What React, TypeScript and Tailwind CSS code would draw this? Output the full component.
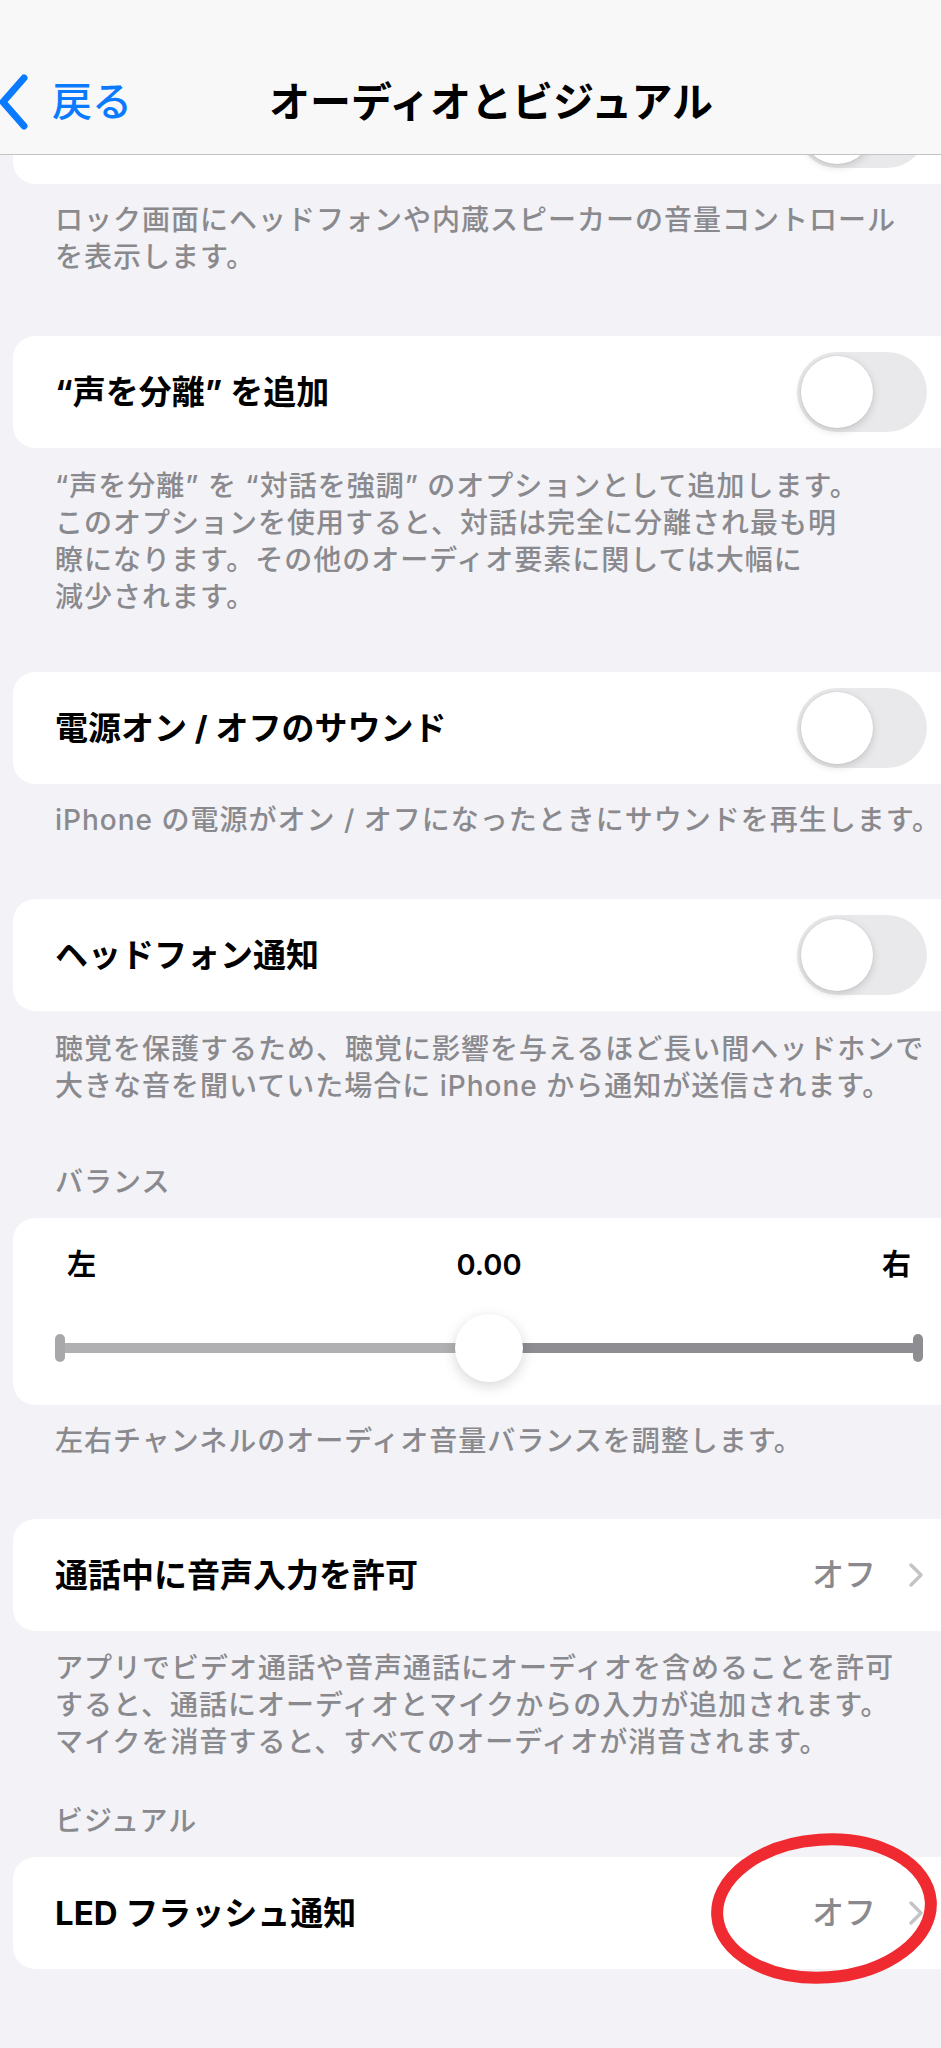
import { ReactNode } from "react";

const FONT = { fontFamily: 'Inter, "Noto Sans CJK JP", sans-serif' };

function Toggle() {
  return (
    <div className="w-[130px] h-[80px] rounded-full bg-[#e9e9eb] p-[4px] shrink-0">
      <div className="w-[72px] h-[72px] rounded-full bg-white shadow-[0_3px_8px_rgba(0,0,0,0.15),0_0_0_1px_rgba(0,0,0,0.03)]" />
    </div>
  );
}

function Chevron() {
  return (
    <svg width="16" height="26" viewBox="0 0 16 26" fill="none" className="shrink-0">
      <path d="M3 3 L13 13 L3 23" stroke="#c4c4c7" strokeWidth="3.5" strokeLinecap="round" strokeLinejoin="round" />
    </svg>
  );
}

function Row({ title, right, className = "", children }: { title?: string; right: ReactNode; className?: string; children?: ReactNode }) {
  return (
    <div className={`relative mx-[13px] h-[112px] bg-white rounded-[22px] flex items-center justify-between pl-[42px] pr-[42px] ${className}`}>
      <span className="text-[33px] font-bold text-black leading-none">{title}</span>
      {right}
      {children}
    </div>
  );
}

function Value() {
  return (
    <div className="flex items-center gap-[32px] pr-[3px]">
      <span className="text-[32px] text-[#8a8a8e] leading-none font-medium">オフ</span>
      <Chevron />
    </div>
  );
}

function Footer({ lines, className = "" }: { lines: string[]; className?: string }) {
  return (
    <div className={`px-[55px] text-[28px] tracking-[1px] leading-[37px] text-[#8a8a8e] font-medium ${className}`}>
      {lines.map((l, i) => (
        <p key={i} className="whitespace-nowrap">{l}</p>
      ))}
    </div>
  );
}

export default function App() {
  return (
    <div className="w-[941px] min-h-[2048px] overflow-hidden bg-[#f2f2f7]" style={FONT}>
      <div className="relative w-[982px] pb-[80px]">
        {/* Nav bar */}
        <nav className="relative z-10 h-[155px] bg-[#f8f8f8] border-b border-[#c3c3c6] pt-[74px]">
          <div className="grid grid-cols-[1fr_auto_1fr] items-center h-[46px]">
            <div className="flex items-center gap-[24px] -ml-[2px]">
              <svg width="30" height="56" viewBox="0 0 30 56" fill="none">
                <path d="M26 4 L5 28 L26 52" stroke="#0a7aff" strokeWidth="7" strokeLinecap="round" strokeLinejoin="round" />
              </svg>
              <span className="text-[40px] text-[#0a7aff] leading-none font-medium">戻る</span>
            </div>
            <h1 className="text-[41px] font-bold text-black leading-none">オーディオとビジュアル</h1>
            <div />
          </div>
        </nav>

        <div className="-mt-[83px]">
          {/* row scrolled under the nav bar, only its bottom shows */}
          <Row right={<Toggle />} />
          <Footer className="pt-[18px]" lines={["ロック画面にヘッドフォンや内蔵スピーカーの音量コントロール", "を表示します。"]} />

          <Row className="mt-[60px]" title="“声を分離” を追加" right={<Toggle />} />
          <Footer
            className="pt-[20px]"
            lines={[
              "“声を分離” を “対話を強調” のオプションとして追加します。",
              "このオプションを使用すると、対話は完全に分離され最も明",
              "瞭になります。その他のオーディオ要素に関しては大幅に",
              "減少されます。",
            ]}
          />

          <Row className="mt-[56px]" title="電源オン / オフのサウンド" right={<Toggle />} />
          <Footer className="pt-[18px] tracking-[0.8px]" lines={["iPhone の電源がオン / オフになったときにサウンドを再生します。"]} />

          <Row className="mt-[60px]" title="ヘッドフォン通知" right={<Toggle />} />
          <Footer
            className="pt-[20px]"
            lines={["聴覚を保護するため、聴覚に影響を与えるほど長い間ヘッドホンで", "大きな音を聞いていた場合に iPhone から通知が送信されます。"]}
          />

          {/* Balance */}
          <p className="mt-[59px] px-[55px] text-[28px] leading-[37px] tracking-[1px] text-[#8a8a8e] font-medium">バランス</p>
          <div className="mt-[17px] mx-[13px] h-[187px] bg-white rounded-[22px] pl-[42px] pr-[46px] pt-[29px]">
            <div className="flex justify-between px-[12px] text-[29px] font-semibold leading-[36px] text-black">
              <span>左</span>
              <span>0.00</span>
              <span>右</span>
            </div>
            <div className="relative mt-[31px] h-[68px] flex items-center">
              <div className="w-[10px] h-[28px] rounded-full bg-[#a8a8aa]" />
              <div className="flex-1 h-[10px] bg-[#b0b0b2]" />
              <div className="flex-1 h-[10px] bg-[#8e8e92]" />
              <div className="w-[10px] h-[28px] rounded-full bg-[#8e8e92]" />
              <div className="absolute left-1/2 top-0 -translate-x-1/2 w-[68px] h-[68px] rounded-full bg-white shadow-[0_4px_14px_rgba(0,0,0,0.16)]" />
            </div>
          </div>
          <Footer className="pt-[18px]" lines={["左右チャンネルのオーディオ音量バランスを調整します。"]} />

          <Row className="mt-[59px]" title="通話中に音声入力を許可" right={<Value />} />
          <Footer
            className="pt-[19px]"
            lines={[
              "アプリでビデオ通話や音声通話にオーディオを含めることを許可",
              "すると、通話にオーディオとマイクからの入力が追加されます。",
              "マイクを消音すると、すべてのオーディオが消音されます。",
            ]}
          />

          <p className="mt-[42px] px-[55px] text-[28px] leading-[37px] tracking-[1px] text-[#8a8a8e] font-medium">ビジュアル</p>
          <Row className="mt-[17px]" title="LED フラッシュ通知" right={<Value />}>
            <svg className="absolute left-[697px] -top-[24px]" width="228" height="151" viewBox="0 0 228 151" fill="none">
              <ellipse cx="114" cy="75.5" rx="107" ry="69" stroke="#ef2b31" strokeWidth="12" transform="rotate(-4 114 75.5)" />
            </svg>
          </Row>
        </div>
      </div>
    </div>
  );
}
